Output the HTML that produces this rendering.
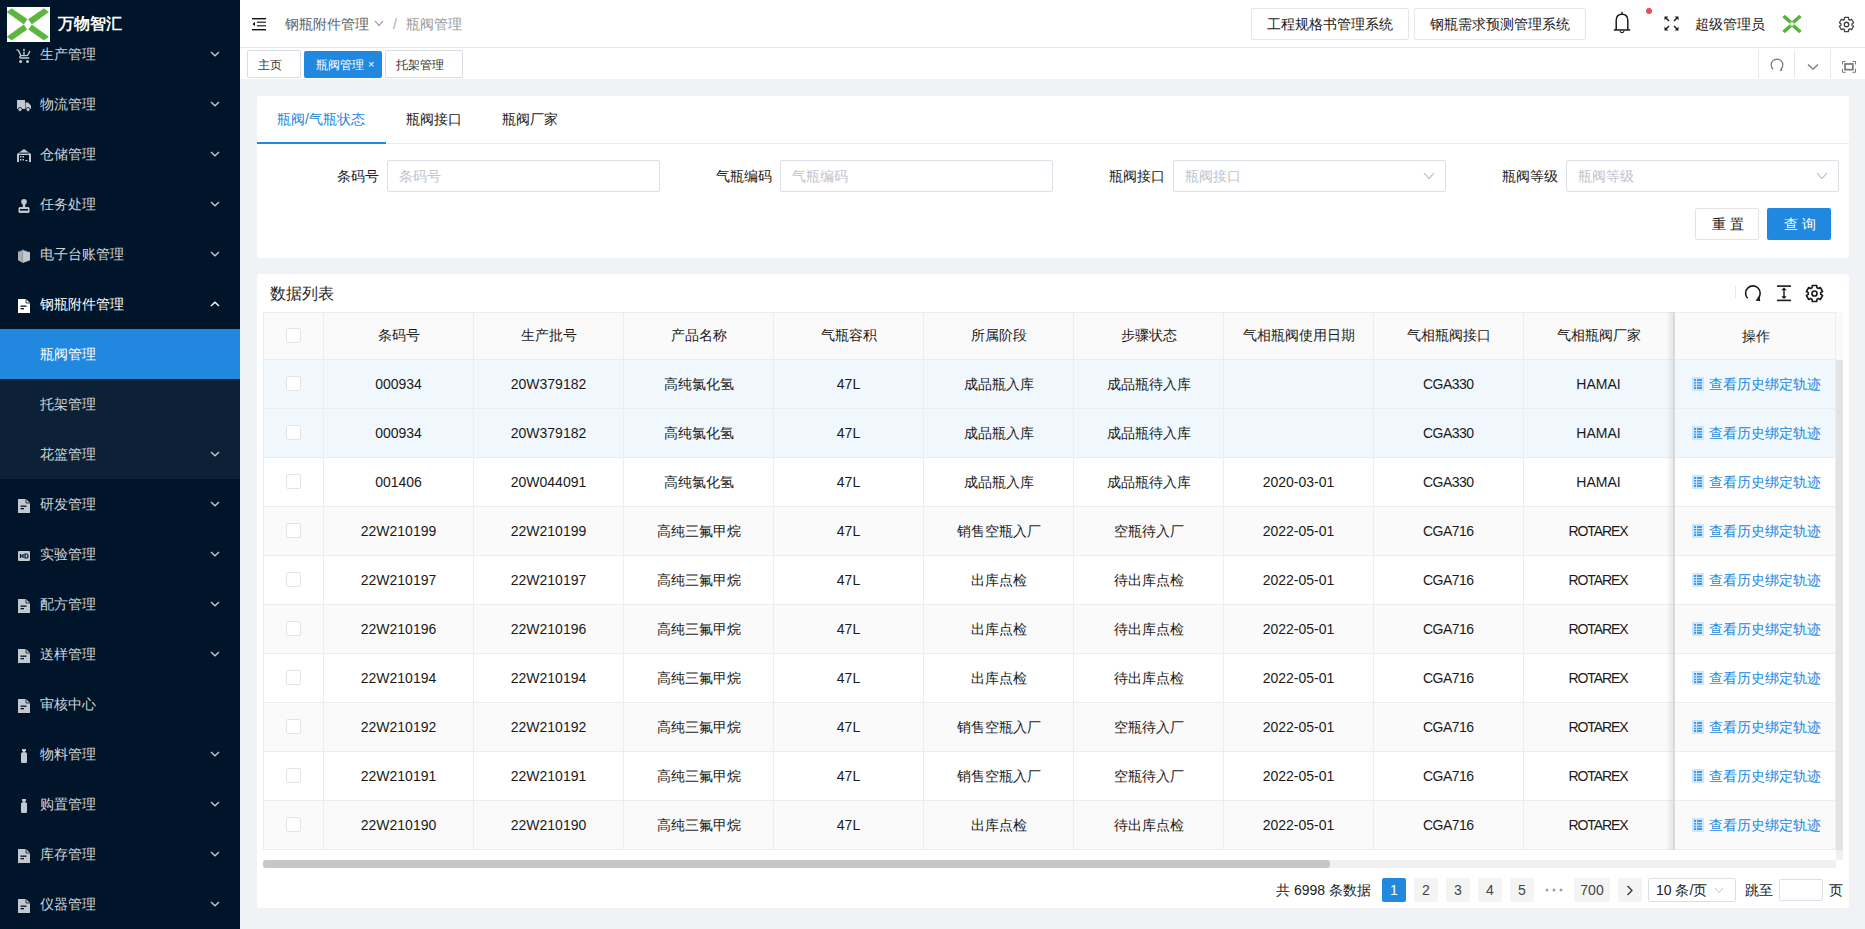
<!DOCTYPE html><html><head><meta charset="utf-8"><style>
*{box-sizing:border-box;margin:0;padding:0}
body{width:1865px;height:929px;overflow:hidden;background:#f0f2f5;position:relative;font-family:'Liberation Sans',sans-serif;color:#333}
.a{position:absolute}
.t{position:absolute;white-space:nowrap;line-height:1}
.mi{position:absolute;left:0;width:240px;height:50px}
.mt{position:absolute;left:40px;top:0;line-height:50px;font-size:14px;color:#d0d4da;white-space:nowrap}
.arr{position:absolute;left:210px;top:22px;width:10px;height:6px}
.ic{position:absolute;left:17px}
.cell{position:absolute;text-align:center;font-size:14px;line-height:48px;white-space:nowrap;color:#1a1a1a}
.vl{position:absolute;width:1px;background:#ededed}
.hl{position:absolute;height:1px;background:#ededed}
.pg{position:absolute;top:878px;height:24px;min-width:24px;background:#f4f4f5;color:#444;font-size:14px;line-height:25px;text-align:center;border-radius:2px}
</style></head><body>

<div class="a" style="left:0;top:0;width:240px;height:929px;background:#001529;overflow:hidden">
<div class="a" style="left:0;top:329px;width:240px;height:150px;background:#0c2135"></div>
<div class="a" style="left:0;top:329px;width:240px;height:50px;background:#2188e0"></div>
<div class="mi" style="top:29px">
<svg class="ic" style="left:16px;top:19px" width="15" height="16" viewBox="0 0 15 16"><path d="M0.9 1.9Q2.4 2 3.1 3.6L4.8 7.6H10.6Q11.9 7.6 12.5 6.1L13.6 3.5" fill="none" stroke="#c3c8cf" stroke-width="1.4" stroke-linecap="round" stroke-linejoin="round"/><path d="M4.8 7.6Q3.7 8.2 3.8 9.3Q3.9 10 5 10H12.8" fill="none" stroke="#c3c8cf" stroke-width="1.3" stroke-linecap="round"/><rect x="7.2" y="0.8" width="1.5" height="2.4" fill="#c3c8cf"/><rect x="7.2" y="3.9" width="1.5" height="2.9" fill="#c3c8cf"/><circle cx="4.6" cy="13.6" r="1.5" fill="#c3c8cf"/><circle cx="11.5" cy="13.6" r="1.5" fill="#c3c8cf"/></svg>
<div class="mt" style="color:#d0d4da">生产管理</div>
<svg class="arr" viewBox="0 0 10 6"><polyline points="1,1 5,4.8 9,1" fill="none" stroke="#c3c8cf" stroke-width="1.4"/></svg>
</div>
<div class="mi" style="top:79px">
<svg class="ic" style="left:17px;top:21px" width="14" height="12" viewBox="0 0 14 12"><path d="M0 0.5Q0 0 0.5 0H8V9H0Z" fill="#c3c8cf"/><path d="M8.5 2.5H11L14 5.5V9H8.5Z" fill="#c3c8cf"/><circle cx="3" cy="9.5" r="2" fill="#c3c8cf" stroke="#001529" stroke-width="0.8"/><circle cx="11" cy="9.5" r="2" fill="#c3c8cf" stroke="#001529" stroke-width="0.8"/></svg>
<div class="mt" style="color:#d0d4da">物流管理</div>
<svg class="arr" viewBox="0 0 10 6"><polyline points="1,1 5,4.8 9,1" fill="none" stroke="#c3c8cf" stroke-width="1.4"/></svg>
</div>
<div class="mi" style="top:129px">
<svg class="ic" style="left:17px;top:20px" width="14" height="13" viewBox="0 0 14 13"><path d="M0 5L7 0L14 5V13H12V6H2V13H0Z" fill="#c3c8cf"/><rect x="2" y="3.6" width="10" height="1" fill="#001529"/><rect x="3" y="7" width="1.5" height="1.5" fill="#c3c8cf"/><rect x="5.5" y="7" width="1.5" height="1.5" fill="#c3c8cf"/><rect x="3" y="10" width="1.5" height="1.5" fill="#c3c8cf"/><rect x="5.5" y="10" width="1.5" height="1.5" fill="#c3c8cf"/><rect x="8.5" y="11" width="2" height="1.2" fill="#c3c8cf"/></svg>
<div class="mt" style="color:#d0d4da">仓储管理</div>
<svg class="arr" viewBox="0 0 10 6"><polyline points="1,1 5,4.8 9,1" fill="none" stroke="#c3c8cf" stroke-width="1.4"/></svg>
</div>
<div class="mi" style="top:179px">
<svg class="ic" style="left:18px;top:20px" width="12" height="14" viewBox="0 0 12 14"><circle cx="6" cy="2.8" r="2.8" fill="#c3c8cf"/><rect x="4.8" y="4" width="2.4" height="4" fill="#c3c8cf"/><rect x="0.5" y="8" width="11" height="6" rx="1.5" fill="#c3c8cf"/><rect x="2" y="10" width="8" height="1.6" fill="#001529"/></svg>
<div class="mt" style="color:#d0d4da">任务处理</div>
<svg class="arr" viewBox="0 0 10 6"><polyline points="1,1 5,4.8 9,1" fill="none" stroke="#c3c8cf" stroke-width="1.4"/></svg>
</div>
<div class="mi" style="top:229px">
<svg class="ic" style="left:18px;top:20px" width="12" height="14" viewBox="0 0 12 14"><path d="M0 2.8L4.8 0.6V14L0 11.2Z" fill="#a9aeb6"/><path d="M4.8 0.6L12 3.2V11.2L4.8 14Z" fill="#c3c8cf"/><path d="M1.2 2.3L4.8 0.6L10 2.6" fill="none" stroke="#001529" stroke-width="0.6"/></svg>
<div class="mt" style="color:#d0d4da">电子台账管理</div>
<svg class="arr" viewBox="0 0 10 6"><polyline points="1,1 5,4.8 9,1" fill="none" stroke="#c3c8cf" stroke-width="1.4"/></svg>
</div>
<div class="mi" style="top:279px">
<svg class="ic" style="left:18px;top:20px" width="12" height="14" viewBox="0 0 12 14"><path d="M0 0H8L12 4V14H0Z" fill="#ffffff"/><path d="M8 0V4H12" fill="none" stroke="#001529" stroke-width="0.8"/><rect x="2.5" y="6.5" width="6" height="1.3" fill="#001529"/><rect x="2.5" y="9" width="3.5" height="1.3" fill="#001529"/></svg>
<div class="mt" style="color:#ffffff">钢瓶附件管理</div>
<svg class="arr" viewBox="0 0 10 6"><polyline points="1,5 5,1.2 9,5" fill="none" stroke="#ffffff" stroke-width="1.4"/></svg>
</div>
<div class="mi" style="top:329px">
<div class="mt" style="color:#ffffff">瓶阀管理</div>
</div>
<div class="mi" style="top:379px">
<div class="mt" style="color:#d0d4da">托架管理</div>
</div>
<div class="mi" style="top:429px">
<div class="mt" style="color:#d0d4da">花篮管理</div>
<svg class="arr" viewBox="0 0 10 6"><polyline points="1,1 5,4.8 9,1" fill="none" stroke="#c3c8cf" stroke-width="1.4"/></svg>
</div>
<div class="mi" style="top:479px">
<svg class="ic" style="left:18px;top:20px" width="12" height="14" viewBox="0 0 12 14"><path d="M0 0H8L12 4V14H0Z" fill="#c3c8cf"/><path d="M8 0V4H12" fill="none" stroke="#001529" stroke-width="0.8"/><rect x="2.5" y="6.5" width="6" height="1.3" fill="#001529"/><rect x="2.5" y="9" width="3.5" height="1.3" fill="#001529"/></svg>
<div class="mt" style="color:#d0d4da">研发管理</div>
<svg class="arr" viewBox="0 0 10 6"><polyline points="1,1 5,4.8 9,1" fill="none" stroke="#c3c8cf" stroke-width="1.4"/></svg>
</div>
<div class="mi" style="top:529px">
<svg class="ic" style="left:18px;top:22px" width="12" height="10" viewBox="0 0 12 10"><rect x="0" y="0" width="12" height="10" rx="1" fill="#c3c8cf"/><path d="M2.5 3V7M2.5 5H5M5 3V7" stroke="#001529" stroke-width="1.2"/><path d="M7 3H9Q10 3 10 5Q10 7 9 7H7Z" fill="none" stroke="#001529" stroke-width="1.2"/></svg>
<div class="mt" style="color:#d0d4da">实验管理</div>
<svg class="arr" viewBox="0 0 10 6"><polyline points="1,1 5,4.8 9,1" fill="none" stroke="#c3c8cf" stroke-width="1.4"/></svg>
</div>
<div class="mi" style="top:579px">
<svg class="ic" style="left:18px;top:20px" width="12" height="14" viewBox="0 0 12 14"><path d="M0 0H8L12 4V14H0Z" fill="#c3c8cf"/><path d="M8 0V4H12" fill="none" stroke="#001529" stroke-width="0.8"/><rect x="2.5" y="6.5" width="6" height="1.3" fill="#001529"/><rect x="2.5" y="9" width="3.5" height="1.3" fill="#001529"/></svg>
<div class="mt" style="color:#d0d4da">配方管理</div>
<svg class="arr" viewBox="0 0 10 6"><polyline points="1,1 5,4.8 9,1" fill="none" stroke="#c3c8cf" stroke-width="1.4"/></svg>
</div>
<div class="mi" style="top:629px">
<svg class="ic" style="left:18px;top:20px" width="12" height="14" viewBox="0 0 12 14"><path d="M0 0H8L12 4V14H0Z" fill="#c3c8cf"/><path d="M8 0V4H12" fill="none" stroke="#001529" stroke-width="0.8"/><rect x="2.5" y="6.5" width="6" height="1.3" fill="#001529"/><rect x="2.5" y="9" width="3.5" height="1.3" fill="#001529"/></svg>
<div class="mt" style="color:#d0d4da">送样管理</div>
<svg class="arr" viewBox="0 0 10 6"><polyline points="1,1 5,4.8 9,1" fill="none" stroke="#c3c8cf" stroke-width="1.4"/></svg>
</div>
<div class="mi" style="top:679px">
<svg class="ic" style="left:18px;top:20px" width="12" height="14" viewBox="0 0 12 14"><path d="M0 0H8L12 4V14H0Z" fill="#c3c8cf"/><path d="M8 0V4H12" fill="none" stroke="#001529" stroke-width="0.8"/><rect x="2.5" y="6.5" width="6" height="1.3" fill="#001529"/><rect x="2.5" y="9" width="3.5" height="1.3" fill="#001529"/></svg>
<div class="mt" style="color:#d0d4da">审核中心</div>
</div>
<div class="mi" style="top:729px">
<svg class="ic" style="left:21px;top:20px" width="6" height="14" viewBox="0 0 6 14"><rect x="1" y="0" width="4" height="2.2" fill="#c3c8cf"/><rect x="2" y="2" width="2" height="1.5" fill="#c3c8cf"/><rect x="0" y="3.3" width="6" height="10.7" rx="1.5" fill="#c3c8cf"/></svg>
<div class="mt" style="color:#d0d4da">物料管理</div>
<svg class="arr" viewBox="0 0 10 6"><polyline points="1,1 5,4.8 9,1" fill="none" stroke="#c3c8cf" stroke-width="1.4"/></svg>
</div>
<div class="mi" style="top:779px">
<svg class="ic" style="left:21px;top:20px" width="6" height="14" viewBox="0 0 6 14"><rect x="1" y="0" width="4" height="2.2" fill="#c3c8cf"/><rect x="2" y="2" width="2" height="1.5" fill="#c3c8cf"/><rect x="0" y="3.3" width="6" height="10.7" rx="1.5" fill="#c3c8cf"/></svg>
<div class="mt" style="color:#d0d4da">购置管理</div>
<svg class="arr" viewBox="0 0 10 6"><polyline points="1,1 5,4.8 9,1" fill="none" stroke="#c3c8cf" stroke-width="1.4"/></svg>
</div>
<div class="mi" style="top:829px">
<svg class="ic" style="left:18px;top:20px" width="12" height="14" viewBox="0 0 12 14"><path d="M0 0H8L12 4V14H0Z" fill="#c3c8cf"/><path d="M8 0V4H12" fill="none" stroke="#001529" stroke-width="0.8"/><rect x="2.5" y="6.5" width="6" height="1.3" fill="#001529"/><rect x="2.5" y="9" width="3.5" height="1.3" fill="#001529"/></svg>
<div class="mt" style="color:#d0d4da">库存管理</div>
<svg class="arr" viewBox="0 0 10 6"><polyline points="1,1 5,4.8 9,1" fill="none" stroke="#c3c8cf" stroke-width="1.4"/></svg>
</div>
<div class="mi" style="top:879px">
<svg class="ic" style="left:18px;top:20px" width="12" height="14" viewBox="0 0 12 14"><path d="M0 0H8L12 4V14H0Z" fill="#c3c8cf"/><path d="M8 0V4H12" fill="none" stroke="#001529" stroke-width="0.8"/><rect x="2.5" y="6.5" width="6" height="1.3" fill="#001529"/><rect x="2.5" y="9" width="3.5" height="1.3" fill="#001529"/></svg>
<div class="mt" style="color:#d0d4da">仪器管理</div>
<svg class="arr" viewBox="0 0 10 6"><polyline points="1,1 5,4.8 9,1" fill="none" stroke="#c3c8cf" stroke-width="1.4"/></svg>
</div>
<div class="a" style="left:0;top:0;width:240px;height:44px;background:#001529"></div>
<div class="a" style="left:7px;top:7px;width:43px;height:35px;background:#fff"><svg width="43" height="35" viewBox="0 0 43 35" style="position:absolute;left:0;top:0"><g fill="#5bb53e" stroke="#5bb53e" stroke-width="0.7" stroke-linejoin="round"><path d="M0.2 5.1L4.7 1.7L20.1 12.3L16.7 17.0Z"/><path d="M41.4 5.1L36.9 1.7L21.5 12.3L24.9 17.0Z"/><path d="M0.2 29.8L4.7 33.1L19.9 22.4L16.7 17.9Z"/><path d="M41.4 29.8L36.9 33.1L21.7 22.4L24.9 17.9Z"/></g></svg></div>
<div class="t" style="left:58px;top:16px;font-size:16px;font-weight:bold;color:#fff">万物智汇</div>
</div>
<div class="a" style="left:240px;top:0;width:1625px;height:48px;background:#fff;border-bottom:1px solid #e6e6e6"></div>
<svg class="a" style="left:252px;top:17px" width="15" height="14" viewBox="0 0 15 14"><rect x="0" y="1" width="14" height="1.4" fill="#111"/><rect x="5" y="4.6" width="9" height="1.3" fill="#333"/><rect x="5" y="8.1" width="9" height="1.3" fill="#333"/><rect x="0" y="12" width="14" height="1.4" fill="#111"/><path d="M0.5 7L3 4.8V9.2Z" fill="#111"/></svg>
<div class="t" style="left:285px;top:17px;font-size:14px;color:#606266">钢瓶附件管理</div>
<svg class="a" style="left:374px;top:20px" width="10" height="7" viewBox="0 0 10 7"><polyline points="1,1 5,5.5 9,1" fill="none" stroke="#888" stroke-width="1.1"/></svg>
<div class="t" style="left:393px;top:17px;font-size:14px;color:#a8abb2">/</div>
<div class="t" style="left:406px;top:17px;font-size:14px;color:#9a9a9a">瓶阀管理</div>
<div class="a" style="left:1251px;top:8px;width:158px;height:32px;border:1px solid #e6e6e6;border-radius:2px"></div>
<div class="t" style="left:1267px;top:17px;font-size:14px;color:#1a1a1a">工程规格书管理系统</div>
<div class="a" style="left:1414px;top:8px;width:172px;height:32px;border:1px solid #e6e6e6;border-radius:2px"></div>
<div class="t" style="left:1430px;top:17px;font-size:14px;color:#1a1a1a">钢瓶需求预测管理系统</div>
<svg class="a" style="left:1613px;top:11px" width="18" height="23" viewBox="0 0 18 23"><path d="M3.2 18.8V9.5Q3.2 3.2 9 3.2Q14.8 3.2 14.8 9.5V18.8" fill="none" stroke="#1a1a1a" stroke-width="1.5"/><rect x="0.8" y="18.2" width="16.4" height="1.5" fill="#1a1a1a"/><rect x="8.3" y="0.8" width="1.4" height="2.6" fill="#1a1a1a"/><path d="M7 19.8Q7 21.6 9 21.6Q11 21.6 11 19.8" fill="none" stroke="#1a1a1a" stroke-width="1.1"/></svg>
<div class="a" style="left:1646px;top:8px;width:6px;height:6px;border-radius:3px;background:#f5484d"></div>
<svg class="a" style="left:1664px;top:16px" width="15" height="15" viewBox="0 0 15 15"><g stroke="#1a1a1a" stroke-width="1.4" fill="#1a1a1a"><line x1="1.5" y1="1.5" x2="5" y2="5"/><line x1="13.5" y1="1.5" x2="10" y2="5"/><line x1="1.5" y1="13.5" x2="5" y2="10"/><line x1="13.5" y1="13.5" x2="10" y2="10"/></g><g fill="#1a1a1a"><path d="M0.5 0.5H4.3L0.5 4.3Z"/><path d="M14.5 0.5H10.7L14.5 4.3Z"/><path d="M0.5 14.5H4.3L0.5 10.7Z"/><path d="M14.5 14.5H10.7L14.5 10.7Z"/></g></svg>
<div class="t" style="left:1695px;top:17px;font-size:14px;color:#1a1a1a">超级管理员</div>
<svg class="a" style="left:1781px;top:13px" width="22" height="22" viewBox="0 0 22 22"><g stroke="#52b535" stroke-width="3.6"><line x1="2.5" y1="3" x2="10" y2="9.5"/><line x1="19.5" y1="3" x2="12" y2="9.5"/><line x1="2.5" y1="19" x2="10" y2="12.5"/><line x1="19.5" y1="19" x2="12" y2="12.5"/></g></svg>
<svg class="a" style="left:1838px;top:16px" width="17" height="17" viewBox="-1 -1 17 17"><path d="M5.47 0.43 L9.53 0.43 L9.58 2.35 L10.92 3.13 L12.61 2.21 L14.63 5.72 L13.00 6.73 L13.00 8.27 L14.63 9.28 L12.61 12.79 L10.92 11.87 L9.58 12.65 L9.53 14.57 L5.47 14.57 L5.42 12.65 L4.08 11.87 L2.39 12.79 L0.37 9.28 L2.00 8.27 L2.00 6.73 L0.37 5.72 L2.39 2.21 L4.08 3.13 L5.42 2.35Z" fill="none" stroke="#444" stroke-width="1.3" stroke-linejoin="round"/><circle cx="7.5" cy="7.5" r="2.25" fill="none" stroke="#444" stroke-width="1.3"/></svg>
<div class="a" style="left:240px;top:48px;width:1625px;height:31px;background:#fff"></div>
<div class="a" style="left:247px;top:50px;width:54px;height:28px;border:1px solid #d8dce5;border-radius:2px"></div>
<div class="t" style="left:258px;top:59px;font-size:12px;color:#333">主页</div>
<div class="a" style="left:304px;top:51px;width:78px;height:27px;background:#2188e0;border-radius:2px"></div>
<div class="t" style="left:316px;top:59px;font-size:12px;color:#fff">瓶阀管理</div>
<div class="t" style="left:368px;top:59px;font-size:11px;color:#fff">×</div>
<div class="a" style="left:385px;top:50px;width:78px;height:28px;border:1px solid #d8dce5;border-radius:2px"></div>
<div class="t" style="left:396px;top:59px;font-size:12px;color:#333">托架管理</div>
<div class="a" style="left:1758px;top:50px;width:1px;height:28px;background:#e8e8e8"></div>
<div class="a" style="left:1794px;top:50px;width:1px;height:28px;background:#e8e8e8"></div>
<div class="a" style="left:1830px;top:50px;width:1px;height:28px;background:#e8e8e8"></div>
<svg class="a" style="left:1769px;top:57px" width="16" height="16" viewBox="0 0 16 16"><path d="M4.2 12.3A5.8 5.8 0 1 1 11.8 12.3" fill="none" stroke="#777" stroke-width="1.2"/><path d="M10.3 13.6L12.8 11L13.3 14Z" fill="#777"/></svg>
<svg class="a" style="left:1807px;top:63px" width="12" height="8" viewBox="0 0 12 8"><polyline points="1,1.5 6,6.2 11,1.5" fill="none" stroke="#777" stroke-width="1.3"/></svg>
<svg class="a" style="left:1841px;top:60px" width="16" height="14" viewBox="0 0 16 14"><g fill="none" stroke="#777" stroke-width="1"><path d="M1.5 4.5V1.5H4.5M11.5 1.5H14.5V4.5M1.5 8.8V12.3H4.5M11.5 12.3H14.5V8.8"/></g><rect x="4.05" y="3.95" width="7.8" height="5.7" fill="none" stroke="#777" stroke-width="1.7"/></svg>
<div class="a" style="left:257px;top:96px;width:1592px;height:162px;background:#fff;border-radius:3px"></div>
<div class="a" style="left:257px;top:143px;width:1592px;height:1px;background:#e8eaec"></div>
<div class="a" style="left:257px;top:142px;width:129px;height:2px;background:#2188e0"></div>
<div class="t" style="left:277px;top:112px;font-size:14px;color:#2188e0">瓶阀/气瓶状态</div>
<div class="t" style="left:406px;top:112px;font-size:14px;color:#1a1a1a">瓶阀接口</div>
<div class="t" style="left:502px;top:112px;font-size:14px;color:#1a1a1a">瓶阀厂家</div>
<div class="t" style="left:337px;top:169px;font-size:14px;color:#1a1a1a">条码号</div>
<div class="a" style="left:387px;top:160px;width:273px;height:32px;border:1px solid #dcdfe6;border-radius:2px"></div>
<div class="t" style="left:399px;top:169px;font-size:14px;color:#c0c4cc">条码号</div>
<div class="t" style="left:716px;top:169px;font-size:14px;color:#1a1a1a">气瓶编码</div>
<div class="a" style="left:780px;top:160px;width:273px;height:32px;border:1px solid #dcdfe6;border-radius:2px"></div>
<div class="t" style="left:792px;top:169px;font-size:14px;color:#c0c4cc">气瓶编码</div>
<div class="t" style="left:1109px;top:169px;font-size:14px;color:#1a1a1a">瓶阀接口</div>
<div class="a" style="left:1173px;top:160px;width:273px;height:32px;border:1px solid #dcdfe6;border-radius:2px"></div>
<div class="t" style="left:1185px;top:169px;font-size:14px;color:#c0c4cc">瓶阀接口</div>
<svg class="a" style="left:1423px;top:172px" width="12" height="8" viewBox="0 0 12 8"><polyline points="1,1 6,6.5 11,1" fill="none" stroke="#b0b3b8" stroke-width="1.1"/></svg>
<div class="t" style="left:1502px;top:169px;font-size:14px;color:#1a1a1a">瓶阀等级</div>
<div class="a" style="left:1566px;top:160px;width:273px;height:32px;border:1px solid #dcdfe6;border-radius:2px"></div>
<div class="t" style="left:1578px;top:169px;font-size:14px;color:#c0c4cc">瓶阀等级</div>
<svg class="a" style="left:1816px;top:172px" width="12" height="8" viewBox="0 0 12 8"><polyline points="1,1 6,6.5 11,1" fill="none" stroke="#b0b3b8" stroke-width="1.1"/></svg>
<div class="a" style="left:1695px;top:208px;width:64px;height:32px;border:1px solid #e2e2e2;border-radius:2px;background:#fff"></div>
<div class="t" style="left:1712px;top:217px;font-size:14px;color:#1a1a1a;letter-spacing:4px">重置</div>
<div class="a" style="left:1767px;top:208px;width:64px;height:32px;background:#2188e0;border-radius:2px"></div>
<div class="t" style="left:1784px;top:217px;font-size:14px;color:#fff;letter-spacing:4px">查询</div>
<div class="a" style="left:257px;top:274px;width:1592px;height:634px;background:#fff;border-radius:3px"></div>
<div class="t" style="left:270px;top:286px;font-size:16px;color:#1f1f1f">数据列表</div>
<div class="a" style="left:1735px;top:286px;width:1px;height:12px;background:#e8e8e8"></div>
<svg class="a" style="left:1744px;top:284px" width="18" height="18" viewBox="0 0 18 18"><path d="M3.6 14.2A7.3 7.3 0 1 1 13.8 14.6" fill="none" stroke="#1a1a1a" stroke-width="1.6"/><path d="M11.3 16.6L15.6 12.6L16.2 17.2Z" fill="#1a1a1a"/></svg>
<svg class="a" style="left:1776px;top:285px" width="16" height="17" viewBox="0 0 16 17"><rect x="1" y="0.3" width="14" height="1.6" fill="#1a1a1a"/><rect x="1" y="14.6" width="14" height="1.6" fill="#1a1a1a"/><rect x="7.3" y="3.5" width="1.4" height="9.5" fill="#1a1a1a"/><path d="M5.3 5.3L8 2.6L10.7 5.3Z" fill="#1a1a1a"/><path d="M5.3 11.2L8 13.9L10.7 11.2Z" fill="#1a1a1a"/></svg>
<svg class="a" style="left:1805px;top:284px" width="19" height="19" viewBox="-1 -1 19 19"><path d="M6.20 0.49 L10.80 0.49 L10.86 2.67 L12.37 3.54 L14.29 2.51 L16.58 6.48 L14.73 7.62 L14.73 9.38 L16.58 10.52 L14.29 14.49 L12.37 13.46 L10.86 14.33 L10.80 16.51 L6.20 16.51 L6.14 14.33 L4.63 13.46 L2.71 14.49 L0.42 10.52 L2.27 9.38 L2.27 7.62 L0.42 6.48 L2.71 2.51 L4.63 3.54 L6.14 2.67Z" fill="none" stroke="#1a1a1a" stroke-width="1.6" stroke-linejoin="round"/><circle cx="8.5" cy="8.5" r="2.55" fill="none" stroke="#1a1a1a" stroke-width="1.6"/></svg>
<div class="a" style="left:263px;top:312px;width:1573px;height:48px;background:#fafafa"></div>
<div class="a" style="left:263px;top:360px;width:1573px;height:48px;background:#f0f8fe"></div>
<div class="a" style="left:263px;top:409px;width:1573px;height:48px;background:#f0f8fe"></div>
<div class="a" style="left:263px;top:458px;width:1573px;height:48px;background:#fff"></div>
<div class="a" style="left:263px;top:507px;width:1573px;height:48px;background:#fafafa"></div>
<div class="a" style="left:263px;top:556px;width:1573px;height:48px;background:#fff"></div>
<div class="a" style="left:263px;top:605px;width:1573px;height:48px;background:#fafafa"></div>
<div class="a" style="left:263px;top:654px;width:1573px;height:48px;background:#fff"></div>
<div class="a" style="left:263px;top:703px;width:1573px;height:48px;background:#fafafa"></div>
<div class="a" style="left:263px;top:752px;width:1573px;height:48px;background:#fff"></div>
<div class="a" style="left:263px;top:801px;width:1573px;height:48px;background:#fafafa"></div>
<div class="hl" style="left:263px;top:312px;width:1573px"></div>
<div class="hl" style="left:263px;top:359px;width:1573px"></div>
<div class="hl" style="left:263px;top:408px;width:1573px"></div>
<div class="hl" style="left:263px;top:457px;width:1573px"></div>
<div class="hl" style="left:263px;top:506px;width:1573px"></div>
<div class="hl" style="left:263px;top:555px;width:1573px"></div>
<div class="hl" style="left:263px;top:604px;width:1573px"></div>
<div class="hl" style="left:263px;top:653px;width:1573px"></div>
<div class="hl" style="left:263px;top:702px;width:1573px"></div>
<div class="hl" style="left:263px;top:751px;width:1573px"></div>
<div class="hl" style="left:263px;top:800px;width:1573px"></div>
<div class="hl" style="left:263px;top:849px;width:1573px"></div>
<div class="vl" style="left:263px;top:312px;height:538px"></div>
<div class="vl" style="left:323px;top:312px;height:538px"></div>
<div class="vl" style="left:473px;top:312px;height:538px"></div>
<div class="vl" style="left:623px;top:312px;height:538px"></div>
<div class="vl" style="left:773px;top:312px;height:538px"></div>
<div class="vl" style="left:923px;top:312px;height:538px"></div>
<div class="vl" style="left:1073px;top:312px;height:538px"></div>
<div class="vl" style="left:1223px;top:312px;height:538px"></div>
<div class="vl" style="left:1373px;top:312px;height:538px"></div>
<div class="vl" style="left:1523px;top:312px;height:538px"></div>
<div class="vl" style="left:1673px;top:312px;height:538px"></div>
<div class="a" style="left:286px;top:328px;width:15px;height:15px;border:1px solid #e4e4e4;border-radius:2px;background:#fff"></div>
<div class="cell" style="left:324px;top:312px;width:149px;height:47px;line-height:47px;color:#1a1a1a">条码号</div>
<div class="cell" style="left:474px;top:312px;width:149px;height:47px;line-height:47px;color:#1a1a1a">生产批号</div>
<div class="cell" style="left:624px;top:312px;width:149px;height:47px;line-height:47px;color:#1a1a1a">产品名称</div>
<div class="cell" style="left:774px;top:312px;width:149px;height:47px;line-height:47px;color:#1a1a1a">气瓶容积</div>
<div class="cell" style="left:924px;top:312px;width:149px;height:47px;line-height:47px;color:#1a1a1a">所属阶段</div>
<div class="cell" style="left:1074px;top:312px;width:149px;height:47px;line-height:47px;color:#1a1a1a">步骤状态</div>
<div class="cell" style="left:1224px;top:312px;width:149px;height:47px;line-height:47px;color:#1a1a1a">气相瓶阀使用日期</div>
<div class="cell" style="left:1374px;top:312px;width:149px;height:47px;line-height:47px;color:#1a1a1a">气相瓶阀接口</div>
<div class="cell" style="left:1524px;top:312px;width:149px;height:47px;line-height:47px;color:#1a1a1a">气相瓶阀厂家</div>
<div class="a" style="left:286px;top:376px;width:15px;height:15px;border:1px solid #e4e4e4;border-radius:2px;background:#fff"></div>
<div class="cell" style="left:324px;top:360px;width:149px;height:48px;">000934</div>
<div class="cell" style="left:474px;top:360px;width:149px;height:48px;">20W379182</div>
<div class="cell" style="left:624px;top:360px;width:149px;height:48px;">高纯氯化氢</div>
<div class="cell" style="left:774px;top:360px;width:149px;height:48px;">47L</div>
<div class="cell" style="left:924px;top:360px;width:149px;height:48px;">成品瓶入库</div>
<div class="cell" style="left:1074px;top:360px;width:149px;height:48px;">成品瓶待入库</div>
<div class="cell" style="left:1374px;top:360px;width:149px;height:48px;letter-spacing:-0.5px;text-indent:-0.5px;">CGA330</div>
<div class="cell" style="left:1524px;top:360px;width:149px;height:48px;">HAMAI</div>
<div class="a" style="left:286px;top:425px;width:15px;height:15px;border:1px solid #e4e4e4;border-radius:2px;background:#fff"></div>
<div class="cell" style="left:324px;top:409px;width:149px;height:48px;">000934</div>
<div class="cell" style="left:474px;top:409px;width:149px;height:48px;">20W379182</div>
<div class="cell" style="left:624px;top:409px;width:149px;height:48px;">高纯氯化氢</div>
<div class="cell" style="left:774px;top:409px;width:149px;height:48px;">47L</div>
<div class="cell" style="left:924px;top:409px;width:149px;height:48px;">成品瓶入库</div>
<div class="cell" style="left:1074px;top:409px;width:149px;height:48px;">成品瓶待入库</div>
<div class="cell" style="left:1374px;top:409px;width:149px;height:48px;letter-spacing:-0.5px;text-indent:-0.5px;">CGA330</div>
<div class="cell" style="left:1524px;top:409px;width:149px;height:48px;">HAMAI</div>
<div class="a" style="left:286px;top:474px;width:15px;height:15px;border:1px solid #e4e4e4;border-radius:2px;background:#fff"></div>
<div class="cell" style="left:324px;top:458px;width:149px;height:48px;">001406</div>
<div class="cell" style="left:474px;top:458px;width:149px;height:48px;">20W044091</div>
<div class="cell" style="left:624px;top:458px;width:149px;height:48px;">高纯氯化氢</div>
<div class="cell" style="left:774px;top:458px;width:149px;height:48px;">47L</div>
<div class="cell" style="left:924px;top:458px;width:149px;height:48px;">成品瓶入库</div>
<div class="cell" style="left:1074px;top:458px;width:149px;height:48px;">成品瓶待入库</div>
<div class="cell" style="left:1224px;top:458px;width:149px;height:48px;">2020-03-01</div>
<div class="cell" style="left:1374px;top:458px;width:149px;height:48px;letter-spacing:-0.5px;text-indent:-0.5px;">CGA330</div>
<div class="cell" style="left:1524px;top:458px;width:149px;height:48px;">HAMAI</div>
<div class="a" style="left:286px;top:523px;width:15px;height:15px;border:1px solid #e4e4e4;border-radius:2px;background:#fff"></div>
<div class="cell" style="left:324px;top:507px;width:149px;height:48px;">22W210199</div>
<div class="cell" style="left:474px;top:507px;width:149px;height:48px;">22W210199</div>
<div class="cell" style="left:624px;top:507px;width:149px;height:48px;">高纯三氟甲烷</div>
<div class="cell" style="left:774px;top:507px;width:149px;height:48px;">47L</div>
<div class="cell" style="left:924px;top:507px;width:149px;height:48px;">销售空瓶入厂</div>
<div class="cell" style="left:1074px;top:507px;width:149px;height:48px;">空瓶待入厂</div>
<div class="cell" style="left:1224px;top:507px;width:149px;height:48px;">2022-05-01</div>
<div class="cell" style="left:1374px;top:507px;width:149px;height:48px;letter-spacing:-0.5px;text-indent:-0.5px;">CGA716</div>
<div class="cell" style="left:1524px;top:507px;width:149px;height:48px;letter-spacing:-1.1px;text-indent:-1.1px;">ROTAREX</div>
<div class="a" style="left:286px;top:572px;width:15px;height:15px;border:1px solid #e4e4e4;border-radius:2px;background:#fff"></div>
<div class="cell" style="left:324px;top:556px;width:149px;height:48px;">22W210197</div>
<div class="cell" style="left:474px;top:556px;width:149px;height:48px;">22W210197</div>
<div class="cell" style="left:624px;top:556px;width:149px;height:48px;">高纯三氟甲烷</div>
<div class="cell" style="left:774px;top:556px;width:149px;height:48px;">47L</div>
<div class="cell" style="left:924px;top:556px;width:149px;height:48px;">出库点检</div>
<div class="cell" style="left:1074px;top:556px;width:149px;height:48px;">待出库点检</div>
<div class="cell" style="left:1224px;top:556px;width:149px;height:48px;">2022-05-01</div>
<div class="cell" style="left:1374px;top:556px;width:149px;height:48px;letter-spacing:-0.5px;text-indent:-0.5px;">CGA716</div>
<div class="cell" style="left:1524px;top:556px;width:149px;height:48px;letter-spacing:-1.1px;text-indent:-1.1px;">ROTAREX</div>
<div class="a" style="left:286px;top:621px;width:15px;height:15px;border:1px solid #e4e4e4;border-radius:2px;background:#fff"></div>
<div class="cell" style="left:324px;top:605px;width:149px;height:48px;">22W210196</div>
<div class="cell" style="left:474px;top:605px;width:149px;height:48px;">22W210196</div>
<div class="cell" style="left:624px;top:605px;width:149px;height:48px;">高纯三氟甲烷</div>
<div class="cell" style="left:774px;top:605px;width:149px;height:48px;">47L</div>
<div class="cell" style="left:924px;top:605px;width:149px;height:48px;">出库点检</div>
<div class="cell" style="left:1074px;top:605px;width:149px;height:48px;">待出库点检</div>
<div class="cell" style="left:1224px;top:605px;width:149px;height:48px;">2022-05-01</div>
<div class="cell" style="left:1374px;top:605px;width:149px;height:48px;letter-spacing:-0.5px;text-indent:-0.5px;">CGA716</div>
<div class="cell" style="left:1524px;top:605px;width:149px;height:48px;letter-spacing:-1.1px;text-indent:-1.1px;">ROTAREX</div>
<div class="a" style="left:286px;top:670px;width:15px;height:15px;border:1px solid #e4e4e4;border-radius:2px;background:#fff"></div>
<div class="cell" style="left:324px;top:654px;width:149px;height:48px;">22W210194</div>
<div class="cell" style="left:474px;top:654px;width:149px;height:48px;">22W210194</div>
<div class="cell" style="left:624px;top:654px;width:149px;height:48px;">高纯三氟甲烷</div>
<div class="cell" style="left:774px;top:654px;width:149px;height:48px;">47L</div>
<div class="cell" style="left:924px;top:654px;width:149px;height:48px;">出库点检</div>
<div class="cell" style="left:1074px;top:654px;width:149px;height:48px;">待出库点检</div>
<div class="cell" style="left:1224px;top:654px;width:149px;height:48px;">2022-05-01</div>
<div class="cell" style="left:1374px;top:654px;width:149px;height:48px;letter-spacing:-0.5px;text-indent:-0.5px;">CGA716</div>
<div class="cell" style="left:1524px;top:654px;width:149px;height:48px;letter-spacing:-1.1px;text-indent:-1.1px;">ROTAREX</div>
<div class="a" style="left:286px;top:719px;width:15px;height:15px;border:1px solid #e4e4e4;border-radius:2px;background:#fff"></div>
<div class="cell" style="left:324px;top:703px;width:149px;height:48px;">22W210192</div>
<div class="cell" style="left:474px;top:703px;width:149px;height:48px;">22W210192</div>
<div class="cell" style="left:624px;top:703px;width:149px;height:48px;">高纯三氟甲烷</div>
<div class="cell" style="left:774px;top:703px;width:149px;height:48px;">47L</div>
<div class="cell" style="left:924px;top:703px;width:149px;height:48px;">销售空瓶入厂</div>
<div class="cell" style="left:1074px;top:703px;width:149px;height:48px;">空瓶待入厂</div>
<div class="cell" style="left:1224px;top:703px;width:149px;height:48px;">2022-05-01</div>
<div class="cell" style="left:1374px;top:703px;width:149px;height:48px;letter-spacing:-0.5px;text-indent:-0.5px;">CGA716</div>
<div class="cell" style="left:1524px;top:703px;width:149px;height:48px;letter-spacing:-1.1px;text-indent:-1.1px;">ROTAREX</div>
<div class="a" style="left:286px;top:768px;width:15px;height:15px;border:1px solid #e4e4e4;border-radius:2px;background:#fff"></div>
<div class="cell" style="left:324px;top:752px;width:149px;height:48px;">22W210191</div>
<div class="cell" style="left:474px;top:752px;width:149px;height:48px;">22W210191</div>
<div class="cell" style="left:624px;top:752px;width:149px;height:48px;">高纯三氟甲烷</div>
<div class="cell" style="left:774px;top:752px;width:149px;height:48px;">47L</div>
<div class="cell" style="left:924px;top:752px;width:149px;height:48px;">销售空瓶入厂</div>
<div class="cell" style="left:1074px;top:752px;width:149px;height:48px;">空瓶待入厂</div>
<div class="cell" style="left:1224px;top:752px;width:149px;height:48px;">2022-05-01</div>
<div class="cell" style="left:1374px;top:752px;width:149px;height:48px;letter-spacing:-0.5px;text-indent:-0.5px;">CGA716</div>
<div class="cell" style="left:1524px;top:752px;width:149px;height:48px;letter-spacing:-1.1px;text-indent:-1.1px;">ROTAREX</div>
<div class="a" style="left:286px;top:817px;width:15px;height:15px;border:1px solid #e4e4e4;border-radius:2px;background:#fff"></div>
<div class="cell" style="left:324px;top:801px;width:149px;height:48px;">22W210190</div>
<div class="cell" style="left:474px;top:801px;width:149px;height:48px;">22W210190</div>
<div class="cell" style="left:624px;top:801px;width:149px;height:48px;">高纯三氟甲烷</div>
<div class="cell" style="left:774px;top:801px;width:149px;height:48px;">47L</div>
<div class="cell" style="left:924px;top:801px;width:149px;height:48px;">出库点检</div>
<div class="cell" style="left:1074px;top:801px;width:149px;height:48px;">待出库点检</div>
<div class="cell" style="left:1224px;top:801px;width:149px;height:48px;">2022-05-01</div>
<div class="cell" style="left:1374px;top:801px;width:149px;height:48px;letter-spacing:-0.5px;text-indent:-0.5px;">CGA716</div>
<div class="cell" style="left:1524px;top:801px;width:149px;height:48px;letter-spacing:-1.1px;text-indent:-1.1px;">ROTAREX</div>
<div class="a" style="left:1666px;top:312px;width:8px;height:538px;background:linear-gradient(to right,rgba(0,0,0,0),rgba(0,0,0,0.09))"></div>
<div class="a" style="left:1674px;top:312px;width:1px;height:538px;background:#dadada"></div>
<div class="a" style="left:1675px;top:312px;width:161px;height:48px;background:#fafafa;border-top:1px solid #ededed"></div>
<div class="cell" style="left:1675px;top:313px;width:161px;height:46px;line-height:46px;color:#1a1a1a">操作</div>
<div class="a" style="left:1675px;top:359px;width:161px;height:50px;background:#f0f8fe;border-top:1px solid #ededed;border-bottom:1px solid #ededed"></div>
<svg class="a" style="left:1692px;top:377px" width="12" height="14" viewBox="0 0 12 14"><rect width="12" height="14" fill="#cfe5fa"/><g fill="#3d9be9"><rect x="2" y="2" width="2" height="2"/><rect x="5" y="2" width="5" height="2"/><rect x="2" y="5" width="2" height="1.5"/><rect x="5" y="5" width="5" height="1.5"/><rect x="2" y="7.7" width="2" height="1.5"/><rect x="5" y="7.7" width="5" height="1.5"/><rect x="2" y="10" width="2" height="2"/><rect x="5" y="10" width="5" height="2"/></g></svg>
<div class="t" style="left:1709px;top:377px;font-size:14px;color:#2188e0">查看历史绑定轨迹</div>
<div class="a" style="left:1675px;top:408px;width:161px;height:50px;background:#f0f8fe;border-top:1px solid #ededed;border-bottom:1px solid #ededed"></div>
<svg class="a" style="left:1692px;top:426px" width="12" height="14" viewBox="0 0 12 14"><rect width="12" height="14" fill="#cfe5fa"/><g fill="#3d9be9"><rect x="2" y="2" width="2" height="2"/><rect x="5" y="2" width="5" height="2"/><rect x="2" y="5" width="2" height="1.5"/><rect x="5" y="5" width="5" height="1.5"/><rect x="2" y="7.7" width="2" height="1.5"/><rect x="5" y="7.7" width="5" height="1.5"/><rect x="2" y="10" width="2" height="2"/><rect x="5" y="10" width="5" height="2"/></g></svg>
<div class="t" style="left:1709px;top:426px;font-size:14px;color:#2188e0">查看历史绑定轨迹</div>
<div class="a" style="left:1675px;top:457px;width:161px;height:50px;background:#fff;border-top:1px solid #ededed;border-bottom:1px solid #ededed"></div>
<svg class="a" style="left:1692px;top:475px" width="12" height="14" viewBox="0 0 12 14"><rect width="12" height="14" fill="#cfe5fa"/><g fill="#3d9be9"><rect x="2" y="2" width="2" height="2"/><rect x="5" y="2" width="5" height="2"/><rect x="2" y="5" width="2" height="1.5"/><rect x="5" y="5" width="5" height="1.5"/><rect x="2" y="7.7" width="2" height="1.5"/><rect x="5" y="7.7" width="5" height="1.5"/><rect x="2" y="10" width="2" height="2"/><rect x="5" y="10" width="5" height="2"/></g></svg>
<div class="t" style="left:1709px;top:475px;font-size:14px;color:#2188e0">查看历史绑定轨迹</div>
<div class="a" style="left:1675px;top:506px;width:161px;height:50px;background:#fafafa;border-top:1px solid #ededed;border-bottom:1px solid #ededed"></div>
<svg class="a" style="left:1692px;top:524px" width="12" height="14" viewBox="0 0 12 14"><rect width="12" height="14" fill="#cfe5fa"/><g fill="#3d9be9"><rect x="2" y="2" width="2" height="2"/><rect x="5" y="2" width="5" height="2"/><rect x="2" y="5" width="2" height="1.5"/><rect x="5" y="5" width="5" height="1.5"/><rect x="2" y="7.7" width="2" height="1.5"/><rect x="5" y="7.7" width="5" height="1.5"/><rect x="2" y="10" width="2" height="2"/><rect x="5" y="10" width="5" height="2"/></g></svg>
<div class="t" style="left:1709px;top:524px;font-size:14px;color:#2188e0">查看历史绑定轨迹</div>
<div class="a" style="left:1675px;top:555px;width:161px;height:50px;background:#fff;border-top:1px solid #ededed;border-bottom:1px solid #ededed"></div>
<svg class="a" style="left:1692px;top:573px" width="12" height="14" viewBox="0 0 12 14"><rect width="12" height="14" fill="#cfe5fa"/><g fill="#3d9be9"><rect x="2" y="2" width="2" height="2"/><rect x="5" y="2" width="5" height="2"/><rect x="2" y="5" width="2" height="1.5"/><rect x="5" y="5" width="5" height="1.5"/><rect x="2" y="7.7" width="2" height="1.5"/><rect x="5" y="7.7" width="5" height="1.5"/><rect x="2" y="10" width="2" height="2"/><rect x="5" y="10" width="5" height="2"/></g></svg>
<div class="t" style="left:1709px;top:573px;font-size:14px;color:#2188e0">查看历史绑定轨迹</div>
<div class="a" style="left:1675px;top:604px;width:161px;height:50px;background:#fafafa;border-top:1px solid #ededed;border-bottom:1px solid #ededed"></div>
<svg class="a" style="left:1692px;top:622px" width="12" height="14" viewBox="0 0 12 14"><rect width="12" height="14" fill="#cfe5fa"/><g fill="#3d9be9"><rect x="2" y="2" width="2" height="2"/><rect x="5" y="2" width="5" height="2"/><rect x="2" y="5" width="2" height="1.5"/><rect x="5" y="5" width="5" height="1.5"/><rect x="2" y="7.7" width="2" height="1.5"/><rect x="5" y="7.7" width="5" height="1.5"/><rect x="2" y="10" width="2" height="2"/><rect x="5" y="10" width="5" height="2"/></g></svg>
<div class="t" style="left:1709px;top:622px;font-size:14px;color:#2188e0">查看历史绑定轨迹</div>
<div class="a" style="left:1675px;top:653px;width:161px;height:50px;background:#fff;border-top:1px solid #ededed;border-bottom:1px solid #ededed"></div>
<svg class="a" style="left:1692px;top:671px" width="12" height="14" viewBox="0 0 12 14"><rect width="12" height="14" fill="#cfe5fa"/><g fill="#3d9be9"><rect x="2" y="2" width="2" height="2"/><rect x="5" y="2" width="5" height="2"/><rect x="2" y="5" width="2" height="1.5"/><rect x="5" y="5" width="5" height="1.5"/><rect x="2" y="7.7" width="2" height="1.5"/><rect x="5" y="7.7" width="5" height="1.5"/><rect x="2" y="10" width="2" height="2"/><rect x="5" y="10" width="5" height="2"/></g></svg>
<div class="t" style="left:1709px;top:671px;font-size:14px;color:#2188e0">查看历史绑定轨迹</div>
<div class="a" style="left:1675px;top:702px;width:161px;height:50px;background:#fafafa;border-top:1px solid #ededed;border-bottom:1px solid #ededed"></div>
<svg class="a" style="left:1692px;top:720px" width="12" height="14" viewBox="0 0 12 14"><rect width="12" height="14" fill="#cfe5fa"/><g fill="#3d9be9"><rect x="2" y="2" width="2" height="2"/><rect x="5" y="2" width="5" height="2"/><rect x="2" y="5" width="2" height="1.5"/><rect x="5" y="5" width="5" height="1.5"/><rect x="2" y="7.7" width="2" height="1.5"/><rect x="5" y="7.7" width="5" height="1.5"/><rect x="2" y="10" width="2" height="2"/><rect x="5" y="10" width="5" height="2"/></g></svg>
<div class="t" style="left:1709px;top:720px;font-size:14px;color:#2188e0">查看历史绑定轨迹</div>
<div class="a" style="left:1675px;top:751px;width:161px;height:50px;background:#fff;border-top:1px solid #ededed;border-bottom:1px solid #ededed"></div>
<svg class="a" style="left:1692px;top:769px" width="12" height="14" viewBox="0 0 12 14"><rect width="12" height="14" fill="#cfe5fa"/><g fill="#3d9be9"><rect x="2" y="2" width="2" height="2"/><rect x="5" y="2" width="5" height="2"/><rect x="2" y="5" width="2" height="1.5"/><rect x="5" y="5" width="5" height="1.5"/><rect x="2" y="7.7" width="2" height="1.5"/><rect x="5" y="7.7" width="5" height="1.5"/><rect x="2" y="10" width="2" height="2"/><rect x="5" y="10" width="5" height="2"/></g></svg>
<div class="t" style="left:1709px;top:769px;font-size:14px;color:#2188e0">查看历史绑定轨迹</div>
<div class="a" style="left:1675px;top:800px;width:161px;height:50px;background:#fafafa;border-top:1px solid #ededed;border-bottom:1px solid #ededed"></div>
<svg class="a" style="left:1692px;top:818px" width="12" height="14" viewBox="0 0 12 14"><rect width="12" height="14" fill="#cfe5fa"/><g fill="#3d9be9"><rect x="2" y="2" width="2" height="2"/><rect x="5" y="2" width="5" height="2"/><rect x="2" y="5" width="2" height="1.5"/><rect x="5" y="5" width="5" height="1.5"/><rect x="2" y="7.7" width="2" height="1.5"/><rect x="5" y="7.7" width="5" height="1.5"/><rect x="2" y="10" width="2" height="2"/><rect x="5" y="10" width="5" height="2"/></g></svg>
<div class="t" style="left:1709px;top:818px;font-size:14px;color:#2188e0">查看历史绑定轨迹</div>
<div class="a" style="left:1835px;top:312px;width:1px;height:538px;background:#ededed"></div>
<div class="a" style="left:1836px;top:312px;width:7px;height:48px;background:#fafafa"></div>
<div class="a" style="left:1836px;top:360px;width:7px;height:490px;background:#e3e3e3"></div>
<div class="a" style="left:1836px;top:850px;width:7px;height:10px;background:#f0f0f0"></div>
<div class="a" style="left:263px;top:860px;width:1573px;height:8px;background:#f0f0f0"></div>
<div class="a" style="left:263px;top:860px;width:1067px;height:8px;background:#c6c7c9;border-radius:3px"></div>
<div class="t" style="left:1276px;top:883px;font-size:14px;color:#222">共 6998 条数据</div>
<div class="pg" style="left:1382px;width:24px;background:#2188e0;color:#fff">1</div>
<div class="pg" style="left:1414px;width:24px">2</div>
<div class="pg" style="left:1446px;width:24px">3</div>
<div class="pg" style="left:1478px;width:24px">4</div>
<div class="pg" style="left:1510px;width:24px">5</div>
<div class="pg" style="left:1574px;width:36px">700</div>
<svg class="a" style="left:1545px;top:888px" width="18" height="4" viewBox="0 0 18 4"><g fill="#a0a0a0"><circle cx="2" cy="2" r="1.5"/><circle cx="9" cy="2" r="1.5"/><circle cx="16" cy="2" r="1.5"/></g></svg>
<div class="pg" style="left:1618px;width:24px"></div>
<svg class="a" style="left:1626px;top:885px" width="8" height="11" viewBox="0 0 8 11"><polyline points="1.5,1 6,5.5 1.5,10" fill="none" stroke="#333" stroke-width="1.3"/></svg>
<div class="a" style="left:1648px;top:878px;width:88px;height:24px;border:1px solid #dcdfe6;border-radius:2px"></div>
<div class="t" style="left:1656px;top:883px;font-size:14px;color:#222">10 条/页</div>
<svg class="a" style="left:1714px;top:887px" width="10" height="7" viewBox="0 0 10 7"><polyline points="1,1 5,5.5 9,1" fill="none" stroke="#c0c4cc" stroke-width="1"/></svg>
<div class="t" style="left:1745px;top:883px;font-size:14px;color:#222">跳至</div>
<div class="a" style="left:1779px;top:879px;width:44px;height:22px;border:1px solid #dcdfe6;border-radius:2px"></div>
<div class="t" style="left:1829px;top:883px;font-size:14px;color:#222">页</div>
</body></html>
